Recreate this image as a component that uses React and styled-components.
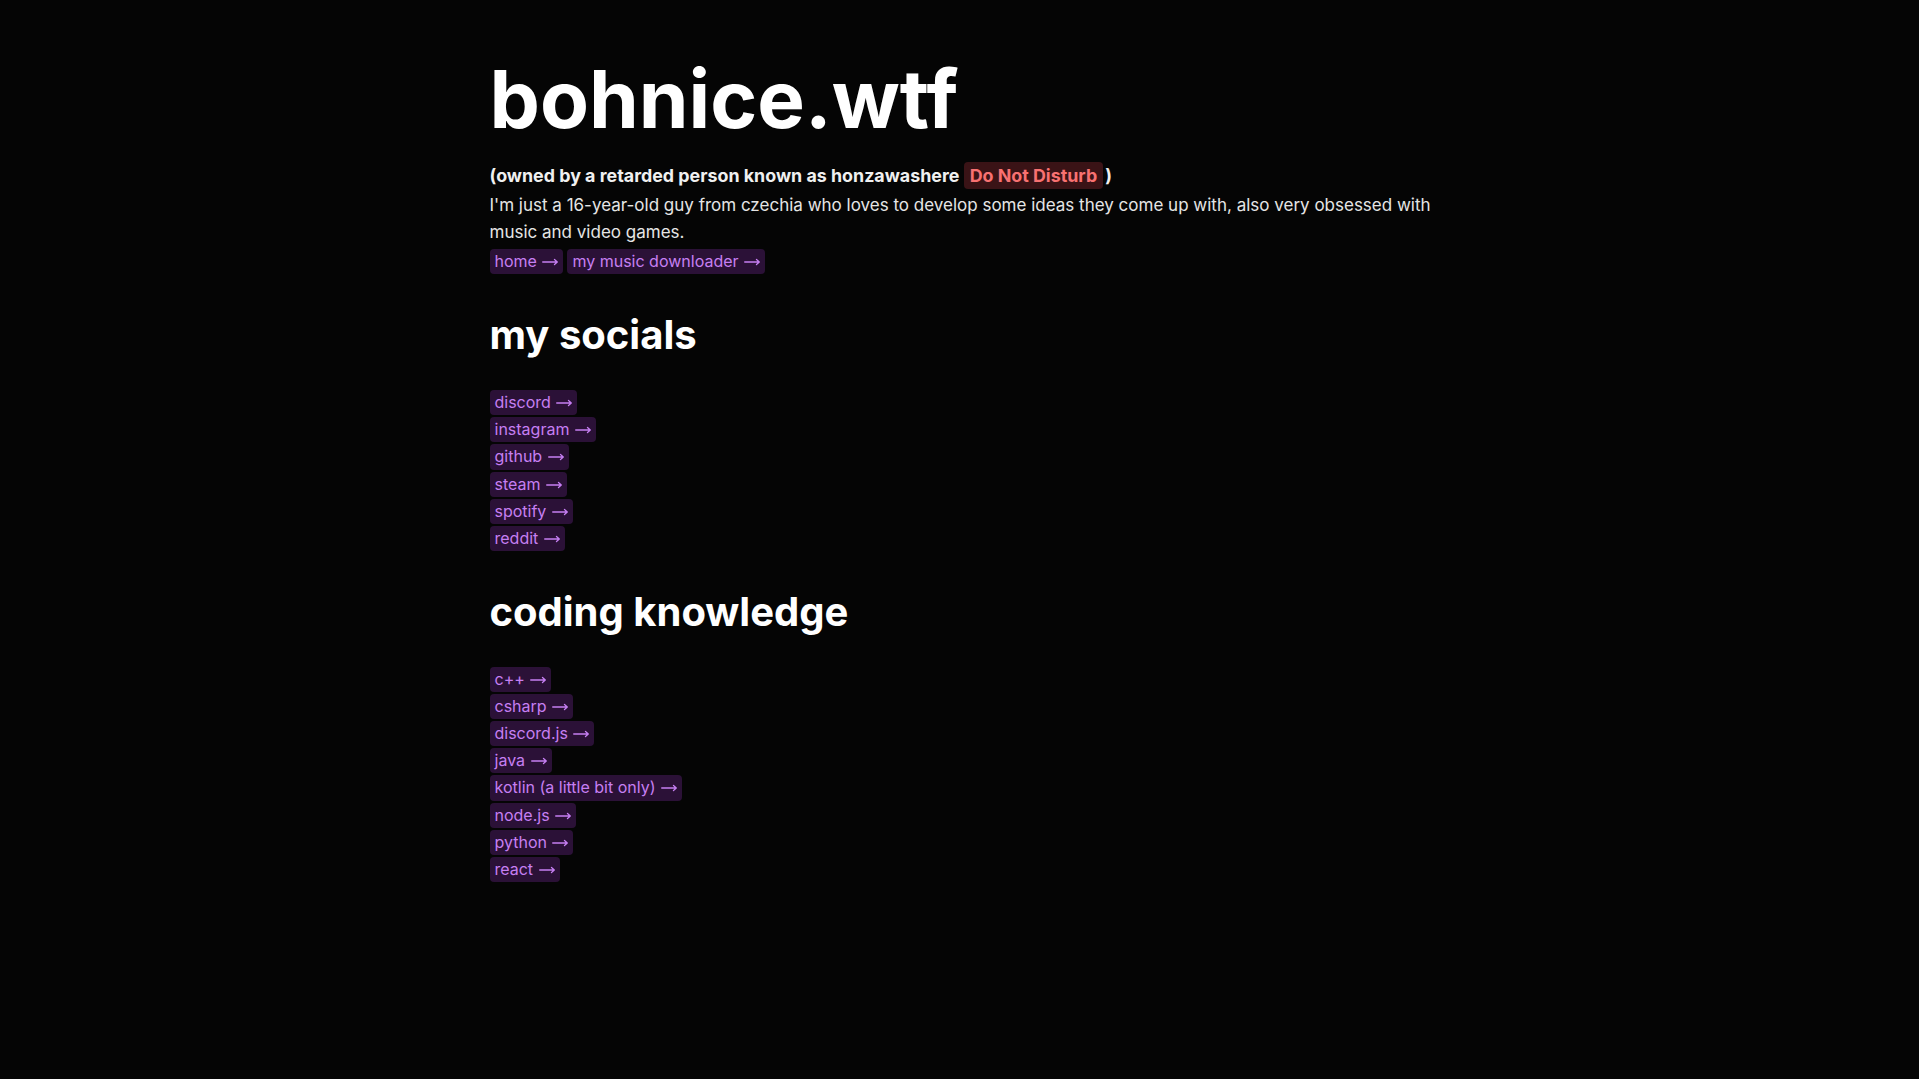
import React from 'react';
import styled, { createGlobalStyle } from 'styled-components';

const GlobalStyle = createGlobalStyle`
  html, body {
    margin: 0;
    padding: 0;
    background: #050505;
  }

  body {
    font-family: Inter, "Noto Sans", sans-serif;
    color: #e8e8e8;
  }
`;

const Page = styled.main`
  min-height: 100vh;
  box-sizing: border-box;
  padding: 59px 0 40px;
`;

const Container = styled.div`
  max-width: 960px;
  margin: 0 auto;
  padding: 0 4px 0 10px;
  box-sizing: border-box;
`;

const Title = styled.h1`
  margin: 0;
  font-size: 80px;
  line-height: 1;
  font-weight: 700;
  color: #ffffff;
`;

const Owner = styled.p`
  margin: 22.5px 0 0;
  font-size: 17.85px;
  line-height: 27px;
  font-weight: 700;
  color: #f0f0f0;
`;

const Status = styled.span`
  display: inline-block;
  margin-right: 2px;
  padding: 2px 6px;
  line-height: 23px;
  border-radius: 4px;
  background: #3a1316;
  color: #f87171;
`;

const Bio = styled.p`
  margin: 3px 0 0;
  font-size: 17px;
  line-height: 27.6px;
  color: #e5e5e5;
`;

const Row = styled.div`
  display: flex;
  gap: 4px;
  margin-top: 2.5px;
`;

const List = styled.div`
  display: flex;
  flex-direction: column;
  align-items: flex-start;
  gap: 2px;
`;

const Tag = styled.a`
  display: inline-block;
  padding: 3px 5px;
  font-size: 16px;
  line-height: 19.2px;
  border-radius: 4px;
  background: #2b1137;
  color: #c67ff2;
  text-decoration: none;
  cursor: pointer;
`;

const ArrowIcon = styled.svg`
  width: 16px;
  height: 10px;
  margin-left: 5.5px;
  vertical-align: baseline;
`;

const Heading = styled.h2`
  margin: 37px 0 30.5px;
  font-size: 40px;
  line-height: 48px;
  font-weight: 700;
  color: #ffffff;
`;

function Arrow() {
  return (
    <ArrowIcon viewBox="0 0 16 10" fill="none" stroke="currentColor" strokeWidth="1.3" strokeLinecap="round" strokeLinejoin="round">
      <path d="M0.7 5H15.3M12.5 2.5L15.3 5L12.5 7.5" />
    </ArrowIcon>
  );
}

function LinkTag({ label }) {
  return (
    <Tag>
      {label}
      <Arrow />
    </Tag>
  );
}

const pages = ['home', 'my music downloader'];
const socials = ['discord', 'instagram', 'github', 'steam', 'spotify', 'reddit'];
const skills = [
  'c++',
  'csharp',
  'discord.js',
  'java',
  'kotlin (a little bit only)',
  'node.js',
  'python',
  'react',
];

function App() {
  return (
    <Page>
      <GlobalStyle />
      <Container>
        <Title>bohnice.wtf</Title>
        <Owner>
          (owned by a retarded person known as honzawashere <Status>Do Not Disturb</Status>)
        </Owner>
        <Bio>
          I'm just a 16-year-old guy from czechia who loves to develop some ideas they come up
          with, also very obsessed with music and video games.
        </Bio>
        <Row>
          {pages.map(p => (
            <LinkTag key={p} label={p} />
          ))}
        </Row>

        <Heading>my socials</Heading>
        <List>
          {socials.map(s => (
            <LinkTag key={s} label={s} />
          ))}
        </List>

        <Heading>coding knowledge</Heading>
        <List>
          {skills.map(s => (
            <LinkTag key={s} label={s} />
          ))}
        </List>
      </Container>
    </Page>
  );
}

export default App;
